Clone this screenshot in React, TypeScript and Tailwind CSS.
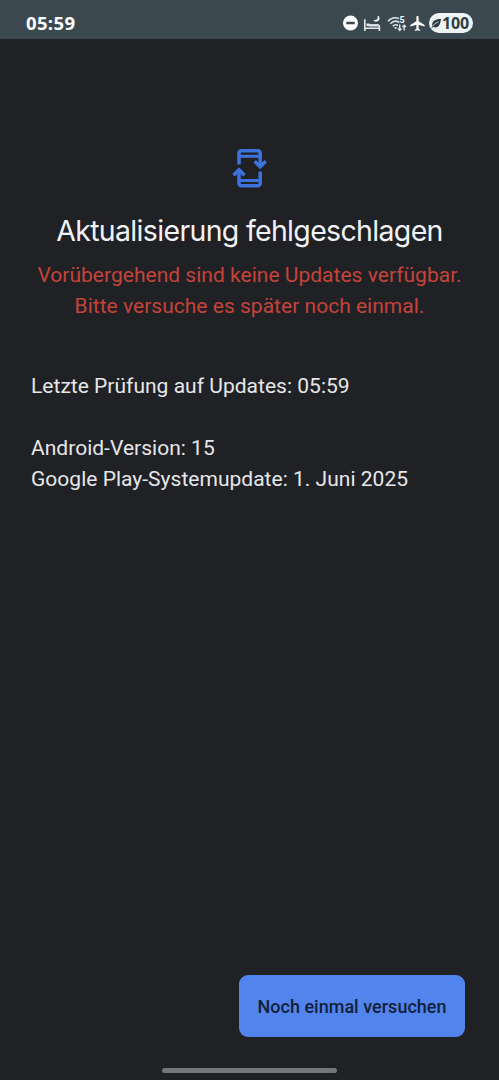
function StatusBar() {
  return (
    <header className="flex h-[39px] items-start justify-between bg-[#3b4850] pl-[26px] pr-[26px] text-white">
      <span className="pt-[11px] font-['Open_Sans',sans-serif] text-[18.500px] leading-[23px] font-bold tracking-[0.350px]">
        05:59
      </span>
      <div className="mt-[13px] flex h-[20px] items-center">
        {/* Do not disturb */}
        <svg className="h-[16px] w-[16px]" viewBox="0 0 16 16">
          <circle cx="7.500" cy="8" r="7.500" fill="#fff" />
          <rect x="3.300" y="6.800" width="8.400" height="2.500" rx=".4" fill="#3b4850" />
        </svg>
        {/* Bedtime */}
        <svg className="ml-[5px] h-[18px] w-[18px]" viewBox="0 0 18 18" fill="none" stroke="#e3eaec" strokeWidth="1.600">
          <path d="M.8 5.200v11.800M.8 14.200h14.600M15.400 17v-4.500a1.500 1.500 0 0 0-1.500-1.500H5.500" />
          <path d="M2.500 10.800h3" strokeWidth="2.600" />
          <path d="M5 11.500h9.500" strokeWidth="2" />
          <path d="M14.200 2.200c.7 3-1.200 5-4.200 4.100 2.800 1.800 6.400-.3 4.200-4.100z" fill="#fff" stroke="#fff" strokeWidth="1.200" />
        </svg>
        {/* Wi-Fi */}
        <svg className="ml-[5px] h-[17px] w-[20px]" viewBox="0 0 20 17" fill="none" stroke="#dce3e6" strokeWidth="1.600">
          <path d="M1 6.200C4 3 8.200 2 12 3.600" />
          <path d="M3.400 8.700c2.400-2.500 6-3.100 8.900-1.200" />
          <path d="M5.800 11.100c1.500-1.400 3.600-1.700 5.200-.6" />
          <path d="M7.300 12.500 8.600 14l1.300-1.500z" fill="#dce3e6" strokeWidth=".6" />
          <path d="M12.700 9.500v6M10.900 13.600l1.800 1.900 1.800-1.900M17.200 15.500v-5M15.400 12.100l1.800-1.800 1.800 1.800" strokeWidth="1.400" />
          <text x="12.500" y="8" fill="#fff" stroke="none" fontSize="9" fontWeight="700" fontFamily="Roboto, sans-serif">5</text>
        </svg>
        {/* Airplane mode */}
        <svg className="ml-[3px] h-[15px] w-[15px]" viewBox="2 2 19 20" fill="#fff">
          <path d="M21 16v-2l-8-5V3.500c0-.83-.67-1.500-1.500-1.500S10 2.670 10 3.500V9l-8 5v2l8-2.500V19l-2 1.500V22l3.500-1 3.500 1v-1.500L13 19v-5.500l8 2.500z" />
        </svg>
        <div className="ml-[4px] flex h-[20px] w-[44px] items-center rounded-full bg-[#eef4f5] pl-[2px] text-[#2d3b42]">
          <svg className="h-[11px] w-[11px]" viewBox="0 0 12 12">
            <path d="M11 1C6 .9 1.500 2.500 1.300 6.700c0 1.400.6 2.500 1.500 3.200C7.800 11.500 10 7.500 11 1z" fill="#2d3b42" />
            <path d="M.8 10.900C2.200 7.700 4.400 5.700 8 4.200" fill="none" stroke="#eef4f5" strokeWidth=".9" />
            <path d="M.7 11.200 2.500 8.500" stroke="#2d3b42" strokeWidth="1" />
          </svg>
          <span className="font-['Open_Sans',sans-serif] text-[16px] leading-[20px] font-bold tracking-[-0.200px]">100</span>
        </div>
      </div>
    </header>
  );
}

export default function App() {
  return (
    <div className="flex h-[1080px] w-[499px] flex-col bg-[#202125] font-[Roboto,sans-serif]">
      <StatusBar />
      <main className="flex flex-1 flex-col">
        <svg className="mt-[108px] mr-px h-[42px] w-[38px] self-center" viewBox="0 0 38 42" fill="none" stroke="#3d73dc" strokeWidth="3.500">
          <path d="M9 17.500V6.200a2.400 2.400 0 0 1 2.400-2.400h16.400A2.400 2.400 0 0 1 30.200 6.200v13" />
          <path d="M9 9.200h21.200M9 33.500h21.200" strokeWidth="3" />
          <path d="M30.200 24.500v11.900a2.400 2.400 0 0 1-2.400 2.400H11.400a2.400 2.400 0 0 1-2.400-2.400V23" />
          <path d="M24.700 14.300l5.500 5.500 5.500-5.500M3.500 28.300l5.500-5.500 5.500 5.500" />
        </svg>
        <h1 className="mt-[24px] text-center font-[Inter,sans-serif] text-[28.500px] leading-[36px] font-normal tracking-[-0.670px] whitespace-nowrap text-[#f1f2f5]">
          Aktualisierung fehlgeschlagen
        </h1>
        <p className="mt-[11px] text-center text-[21px] leading-[31px] tracking-[0.020px] whitespace-nowrap text-[#c5433a]">
          Vorübergehend sind keine Updates verfügbar.
          <br />
          Bitte versuche es später noch einmal.
        </p>
        <div className="mt-[49px] pl-[31px] text-[21px] leading-[31px] tracking-[0.020px] whitespace-nowrap text-[#e6e7ea]">
          <p>Letzte Prüfung auf Updates: 05:59</p>
          <p className="mt-[31px]">Android-Version: 15</p>
          <p>Google Play-Systemupdate: 1. Juni 2025</p>
        </div>
        <button className="mt-auto mr-[34px] h-[62px] w-[226px] self-end rounded-[9px] bg-[#5184ed] text-[18px] font-medium tracking-[0.020px] whitespace-nowrap text-[#142039]">
          Noch einmal versuchen
        </button>
        {/* Gesture bar */}
        <div className="mt-[31px] mb-[7px] h-[5px] w-[175px] self-center rounded-full bg-[#75767a]" />
      </main>
    </div>
  );
}
